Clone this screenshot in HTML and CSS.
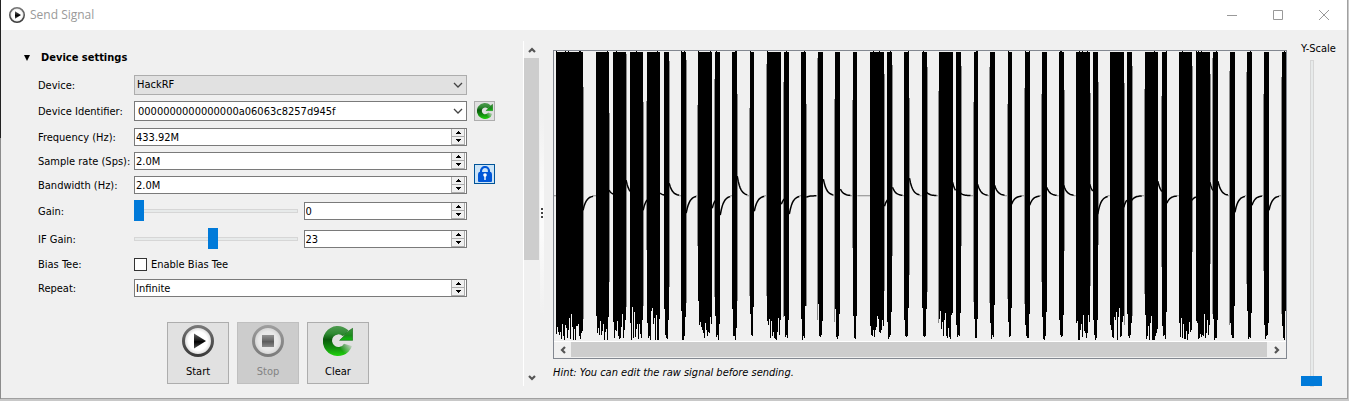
FILE: index.html
```html
<!DOCTYPE html>
<html lang="en">
<head>
<meta charset="utf-8">
<title>Send Signal</title>
<link rel="stylesheet" href="styles.css">
</head>
<body>
<svg class="defs" aria-hidden="true">
  <defs>
    <linearGradient id="ring" x1="0" y1="0" x2="0" y2="1"><stop offset="0" stop-color="#777"/><stop offset=".5" stop-color="#555"/><stop offset="1" stop-color="#3c3c3c"/></linearGradient>
    <radialGradient id="face"><stop offset=".65" stop-color="#fff"/><stop offset="1" stop-color="#d4d4d4"/></radialGradient>
    <linearGradient id="glyph" x1="0" y1="0" x2="0" y2="1"><stop offset="0" stop-color="#666"/><stop offset=".5" stop-color="#111"/><stop offset=".55" stop-color="#000"/><stop offset="1" stop-color="#555"/></linearGradient>
    <linearGradient id="green" x1="0" y1="0" x2="0" y2="1"><stop offset="0" stop-color="#4f9a50"/><stop offset=".25" stop-color="#2f8a33"/><stop offset=".45" stop-color="#0a5a0c"/><stop offset=".75" stop-color="#14930f"/><stop offset="1" stop-color="#20d40c"/></linearGradient>
    <linearGradient id="tip" x1="0" y1="0" x2="0" y2="1"><stop offset="0" stop-color="#3f9440"/><stop offset=".6" stop-color="#1c8a1c"/><stop offset="1" stop-color="#0fc00c"/></linearGradient>
    <linearGradient id="fade" gradientUnits="userSpaceOnUse" x1="60" y1="78" x2="84" y2="56"><stop offset="0" stop-color="#e1e1e1" stop-opacity="0"/><stop offset="1" stop-color="#e1e1e1" stop-opacity=".9"/></linearGradient>
  </defs>
  <symbol id="i-play" viewBox="0 0 32 32"><circle cx="16" cy="16" r="14.5" fill="url(#face)" stroke="url(#ring)" stroke-width="3"/><path d="M12 8.500 24 16 12 23.500Z" fill="url(#glyph)"/></symbol>
  <symbol id="i-stop" viewBox="0 0 32 32"><circle cx="16" cy="16" r="14.500" fill="url(#face)" stroke="url(#ring)" stroke-width="3"/><path d="M10 10h12v12H10z" fill="url(#glyph)"/></symbol>
  <symbol id="i-refresh" viewBox="0 0 90 90">
    <path d="M76 13A45 45 0 1 0 87 60L63 53A19 19 0 1 1 59 30L69 24Z" fill="url(#green)"/>
    <path d="M50 68V92L90 70V50H62Z" fill="url(#fade)"/>
    <path d="M89 7V43H50L61 32 62 30 74 17Z" fill="url(#tip)" stroke="#176d18" stroke-width="2"/>
  </symbol>
  <symbol id="i-down" viewBox="0 0 10 6"><path d="M1 1 5 5 9 1" fill="none" stroke="currentColor" stroke-width="1.3"/></symbol>
  <symbol id="i-arrow" viewBox="0 0 8 6"><path d="M1 1 4 4 7 1" fill="none" stroke="#555" stroke-width="2.2"/></symbol>
  <symbol id="i-tri" viewBox="0 0 5 3"><path d="M2 0h1v1h1v1h1v1H0V2h1V1h1z" fill="#000"/></symbol>
</svg>

<div class="window">
  <header class="titlebar">
    <svg class="app-icon"><use href="#i-play"/></svg>
    <h1 class="title">Send Signal</h1>
    <div class="window-buttons">
      <button class="winbtn" aria-label="Minimize"><svg viewBox="0 0 12 12"><path d="M1 6.500h10"/></svg></button>
      <button class="winbtn" aria-label="Maximize"><svg viewBox="0 0 12 12"><path d="M1.500 1.500h9v9h-9z"/></svg></button>
      <button class="winbtn" aria-label="Close"><svg viewBox="0 0 12 12"><path d="m1 1 10 10M11 1 1 11"/></svg></button>
    </div>
  </header>

  <main class="content">
    <section class="settings">
      <button class="group-title" aria-expanded="true"><svg class="disclosure" viewBox="0 0 8 8"><path d="M1 1h6L4 7z"/></svg>Device settings</button>
      <form class="form">
        <label for="device">Device:</label>
        <span class="combo flat"><select id="device"><option>HackRF</option></select><svg><use href="#i-down"/></svg></span>

        <label for="ident">Device Identifier:</label>
        <span class="combo"><select id="ident"><option>0000000000000000a06063c8257d945f</option></select><svg><use href="#i-down"/></svg></span>
        <button type="button" class="tool" aria-label="Refresh devices"><svg class="refresh-small"><use href="#i-refresh"/></svg></button>

        <label for="freq">Frequency (Hz):</label>
        <span class="spin"><input id="freq" type="text" value="433.92M"><span class="steps"><button type="button" aria-label="Increase"><svg><use href="#i-tri"/></svg></button><button type="button" aria-label="Decrease"><svg><use href="#i-tri"/></svg></button></span></span>

        <label for="rate">Sample rate (Sps):</label>
        <span class="spin"><input id="rate" type="text" value="2.0M"><span class="steps"><button type="button" aria-label="Increase"><svg><use href="#i-tri"/></svg></button><button type="button" aria-label="Decrease"><svg><use href="#i-tri"/></svg></button></span></span>
        <button type="button" class="tool lock" aria-label="Lock bandwidth to sample rate" aria-pressed="true"><svg viewBox="0 0 14 16"><path d="M3 8V5a4 4 0 0 1 8 0v3" fill="none" stroke="#0057d8" stroke-width="2.2"/><path d="M1 6h12q1 1 1 3v6q0 1-1 1H1q-1 0-1-1V9q0-2 1-3z" fill="#0057d8"/><circle cx="7" cy="9" r="1.800" fill="#fff"/><path d="M6.300 9h1.400v5H6.300z" fill="#fff"/></svg></button>

        <label for="band">Bandwidth (Hz):</label>
        <span class="spin"><input id="band" type="text" value="2.0M"><span class="steps"><button type="button" aria-label="Increase"><svg><use href="#i-tri"/></svg></button><button type="button" aria-label="Decrease"><svg><use href="#i-tri"/></svg></button></span></span>

        <label for="gain">Gain:</label>
        <div class="pair"><input class="slider" type="range" min="0" max="47" value="0" aria-label="Gain slider"><span class="spin"><input id="gain" type="text" value="0"><span class="steps"><button type="button" aria-label="Increase"><svg><use href="#i-tri"/></svg></button><button type="button" aria-label="Decrease"><svg><use href="#i-tri"/></svg></button></span></span></div>

        <label for="ifgain">IF Gain:</label>
        <div class="pair"><input class="slider" type="range" min="0" max="47" value="23" aria-label="IF Gain slider"><span class="spin"><input id="ifgain" type="text" value="23"><span class="steps"><button type="button" aria-label="Increase"><svg><use href="#i-tri"/></svg></button><button type="button" aria-label="Decrease"><svg><use href="#i-tri"/></svg></button></span></span></div>

        <span class="caption">Bias Tee:</span>
        <label class="check"><input type="checkbox"><span>Enable Bias Tee</span></label>

        <label for="repeat">Repeat:</label>
        <span class="spin"><input id="repeat" type="text" value="Infinite"><span class="steps"><button type="button" aria-label="Increase"><svg><use href="#i-tri"/></svg></button><button type="button" aria-label="Decrease"><svg><use href="#i-tri"/></svg></button></span></span>
      </form>
      <div class="actions">
        <button class="action"><svg><use href="#i-play"/></svg>Start</button>
        <button class="action" disabled><svg><use href="#i-stop"/></svg>Stop</button>
        <button class="action"><svg class="refresh-large"><use href="#i-refresh"/></svg>Clear</button>
      </div>
    </section>

    <div class="vscroll">
      <button class="arrow up" aria-label="Scroll up"><svg><use href="#i-arrow"/></svg></button>
      <div class="vtrack"><div class="vthumb"></div></div>
      <button class="arrow" aria-label="Scroll down"><svg><use href="#i-arrow"/></svg></button>
    </div>
    <div class="splitter"><i></i><i></i><i></i></div>

    <section class="signal">
      <div class="plot">
        <svg id="wave" class="wave" viewBox="0 0 731 290" preserveAspectRatio="none" role="img" aria-label="Raw signal"></svg>
        <div class="hscroll">
          <button class="arrow left" aria-label="Scroll left"><svg><use href="#i-arrow"/></svg></button>
          <div class="hthumb"></div>
          <button class="arrow right" aria-label="Scroll right"><svg><use href="#i-arrow"/></svg></button>
        </div>
      </div>
      <p class="hint">Hint: You can edit the raw signal before sending.</p>
    </section>

    <div class="yscale">
      <label for="yscale">Y-Scale</label>
      <input id="yscale" class="slider vertical" type="range" min="0" max="100" value="0">
    </div>
  </main>
</div>
<script src="signal.js"></script>
</body>
</html>
```
FILE: styles.css
```css
* { box-sizing: border-box; }

body {
  margin: 0;
  background: linear-gradient(#222 138px, #8c8c8c 138px) left top / 1px 100% no-repeat #c8c8c8;
  color: #000;
  font: 11px/14px "DejaVu Sans Condensed", "DejaVu Sans", Tahoma, sans-serif;
}

button, input, select { font: inherit; color: inherit; margin: 0; }
button { padding: 0; border: 0; background: none; }

.defs { position: absolute; width: 0; height: 0; }

.window {
  display: flex;
  flex-direction: column;
  min-height: calc(100vh - 2px);
  margin: 0 1px;
  border-right: 1px solid #a0a0a0;
  border-bottom: 1px solid #a0a0a0;
  background: #f0f0f0;
}

.titlebar {
  display: flex;
  align-items: center;
  height: 30px;
  padding-left: 8px;
  background: #fff;
}
.app-icon { width: 16px; height: 16px; }
.title {
  flex: 1;
  margin: 0 0 0 5px;
  color: #999;
  font: 12px/16px "Open Sans", "Noto Sans", sans-serif;
}
.window-buttons { display: flex; }
.winbtn { display: grid; place-items: center; width: 46px; height: 29px; }
.winbtn svg { width: 12px; height: 12px; fill: none; stroke: #999; }

.content {
  flex: 1;
  display: grid;
  grid-template-columns: minmax(0, 522fr) 16px 14px minmax(0, 734fr) 60px;
}

.settings { padding: 20px 28px 14px 22px; }
.group-title {
  display: flex;
  align-items: center;
  gap: 10px;
  padding-top: 1px;
  font-weight: bold;
}
.disclosure { width: 8px; height: 8px; }

.form {
  display: grid;
  grid-template-columns: 96px minmax(0, 1fr) 21px;
  grid-template-rows: 27px 26px 26px 22px 26px 26px 30px 20px 28px;
  align-items: center;
  padding-top: 6px;
  padding-left: 15px;
}
.form > label:not(.check), .caption { grid-column: 1; padding-top: 2px; white-space: nowrap; }
.form > .combo, .form > .spin, .pair, .check { grid-column: 2; }
.form > .combo, .form > .spin, .pair { margin-right: 7px; }

.combo { position: relative; display: block; height: 20px; }
.combo select {
  display: block;
  width: 100%;
  height: 20px;
  padding: 1px 20px 0 3px;
  appearance: none;
  border: 1px solid #7a7a7a;
  border-radius: 0;
  background: #fff;
}
.flat select { padding-left: 2px; border-color: #adadad; background: #e1e1e1; }
.combo svg {
  position: absolute;
  right: 4px;
  top: 7px;
  width: 10px;
  height: 6px;
  color: #444;
  pointer-events: none;
}

.spin {
  display: flex;
  height: 18px;
  padding-right: 1px;
  border: 1px solid #7a7a7a;
  background: #fff;
}
.spin input {
  flex: 1;
  min-width: 0;
  padding: 2px 1px 0;
  border: 0;
  background: none;
}
.steps { display: grid; grid-template-rows: 1fr 1fr; width: 14px; }
.steps button {
  display: grid;
  place-items: center;
  border: 1px solid #adadad;
  border-top: 0;
  background: #f0f0f0;
}
.steps svg { display: block; width: 5px; height: 3px; }
.steps button:last-child svg { transform: rotate(180deg); }

.tool {
  grid-column: 3;
  display: grid;
  place-items: center;
  width: 21px;
  height: 20px;
  border: 1px solid #adadad;
  background: #e1e1e1;
}
.refresh-small { width: 16px; height: 16px; }
.lock { grid-row: 4 / span 2; border-color: #005499; background: #cce4f7; }
.lock svg { width: 14px; height: 16px; }

.pair { display: grid; grid-template-columns: 1fr 1fr; align-items: center; gap: 6px; }

.slider { appearance: none; width: 100%; height: 21px; background: none; }
.slider::-webkit-slider-runnable-track {
  height: 4px;
  border: 1px solid #d6d6d6;
  background: #e7eaea;
}
.slider::-webkit-slider-thumb {
  appearance: none;
  width: 10px;
  height: 21px;
  margin: -10px -1px 0;
  border: 0;
  background: #007ad9;
}

.check { display: flex; align-items: center; gap: 4px; }
.check span { padding-top: 2px; }
.check input {
  appearance: none;
  width: 13px;
  height: 13px;
  border: 1px solid #333;
  background: #fff;
}

.actions { display: flex; justify-content: center; gap: 8px; margin: 20px 26px 0 44px; }
.action {
  display: flex;
  flex-direction: column;
  align-items: center;
  gap: 8px;
  width: 62px;
  height: 62px;
  padding-top: 2px;
  border: 1px solid #adadad;
  background: #e1e1e1;
}
.action svg { width: 32px; height: 32px; }
.action .refresh-large { width: 30px; height: 32px; }
.action:disabled { border-color: #bfbfbf; background: #ccc; color: #838383; }
.action:disabled svg { opacity: .55; }

.vscroll {
  display: flex;
  flex-direction: column;
  margin: 11px 0 12px;
  border-left: 1px solid #fff;
}
.arrow { display: grid; place-items: center; flex: none; width: 15px; height: 17px; }
.arrow svg { width: 8px; height: 6px; }
.up svg { transform: rotate(180deg); }
.left svg { transform: rotate(90deg); }
.right svg { transform: rotate(-90deg); }
.vtrack { flex: 1; }
.vthumb { height: 65%; background: #cdcdcd; }

.splitter {
  display: flex;
  flex-direction: column;
  align-items: center;
  justify-content: center;
  gap: 2px;
  width: 4px;
  margin: 80px 0 82px 1px;
  background: linear-gradient(#f0f0f0, #fbfbfb 40%, #fbfbfb 60%, #f0f0f0);
}
.splitter i { width: 2px; height: 2px; background: #444; }

.signal { display: flex; flex-direction: column; padding: 20px 0 18px; }
.plot { flex: 1; display: flex; flex-direction: column; border: 1px solid #828790; }
.wave { flex: 1; display: block; width: 100%; height: 290px; min-height: 0; }
.trace { fill: none; stroke: #000; stroke-width: 1.5; }
.idle { fill: none; stroke: #888; }
.burst { fill: #000; shape-rendering: crispEdges; }
.edge { fill: #8b8b8b; shape-rendering: crispEdges; }
.hscroll { display: flex; height: 17px; padding-bottom: 1px; border-top: 1px solid #fff; }
.hscroll .arrow { width: 17px; height: 15px; }
.hscroll .right { width: 19px; }
.hthumb { flex: 1; background: #cdcdcd; }
.hint { margin: 7px 0 0; font-style: italic; }

.yscale { display: flex; flex-direction: column; padding: 12px 0 11px 14px; }
.vertical {
  flex: 1;
  width: 21px;
  min-height: 0;
  margin-top: 4px;
  writing-mode: vertical-lr;
  direction: rtl;
}
.vertical::-webkit-slider-runnable-track { width: 4px; height: 100%; }
.vertical::-webkit-slider-thumb { width: 21px; height: 10px; margin: 0 0 0 -10px; }
```
FILE: signal.js
```js
// Each burst: start, end, level right after the burst (baseline is 145).
const bursts = [
  [2, 29, 159], [42, 55, 139], [59, 72, 129], [76, 89, 159], [93, 106, 142],
  [110, 115, 132], [127, 132, 162], [144, 158, 157], [161, 166, 164], [178, 183, 125],
  [196, 200, 160], [213, 227, 153], [230, 235, 163], [247, 252, 146], [264, 269, 128],
  [281, 286, 138], [299, 303, 145], [316, 330, 155], [333, 338, 136], [350, 355, 127],
  [367, 372, 141], [384, 398, 131], [401, 406, 142], [419, 423, 133], [435, 440, 134],
  [453, 457, 153], [470, 475, 154], [487, 492, 136], [504, 509, 134], [521, 535, 133],
  [538, 543, 163], [555, 569, 156], [572, 577, 149], [590, 603, 130], [607, 612, 152],
  [624, 637, 149], [641, 655, 131], [658, 663, 130], [675, 680, 161], [692, 697, 154],
  [709, 714, 159], [727, 731, 145]
];
const base = 144.5;
let seed = 11;
const rnd = () => (seed = (seed * 16807) % 2147483647) / 2147483647;

let solid = "", edges = "", trace = "", idle = "M0 " + base + "H2";
bursts.forEach(([a, b, level], i) => {
  const wide = b - a > 6;
  for (let x = a; x < b; x++) {
    let end = wide ? 289 - Math.floor(rnd() * rnd() * 38) : 289 - Math.floor(rnd() * 6);
    if (!wide && (x === a || x === b - 1)) end -= 12 + Math.floor(rnd() * 22);
    if (wide && (x === a || x === b - 1)) end -= Math.floor(rnd() * 22);
    const top = rnd() < 0.12 ? 0 : 1;
    solid += `M${x} ${top}h1V${end}h-1z`;
  }
  const side = rnd() < 0.5 ? a - 1 : b;
  if (side < 731) edges += `M${side} ${3 + Math.floor(rnd() * 60)}h1V${190 + Math.floor(rnd() * 85)}h-1z`;
  const next = bursts[i + 1];
  if (!next) return;
  if (level === 145) {
    idle += `M${b} ${base}H${next[0]}`;
    return;
  }
  const end = next[0];
  trace += `M${b} ${level}`;
  for (let x = b + 1; x <= Math.min(end, b + 10); x++) {
    trace += `L${x} ${(base + (level - base) * Math.exp(-(x - b) / 3.2)).toFixed(1)}`;
  }
  if (end > b + 10) idle += `M${b + 10} ${base}H${end}`;
});
document.getElementById("wave").innerHTML =
  `<path class="idle" d="${idle}"/><path class="edge" d="${edges}"/>` +
  `<path class="burst" d="${solid}"/><path class="trace" d="${trace}"/>`;
```
